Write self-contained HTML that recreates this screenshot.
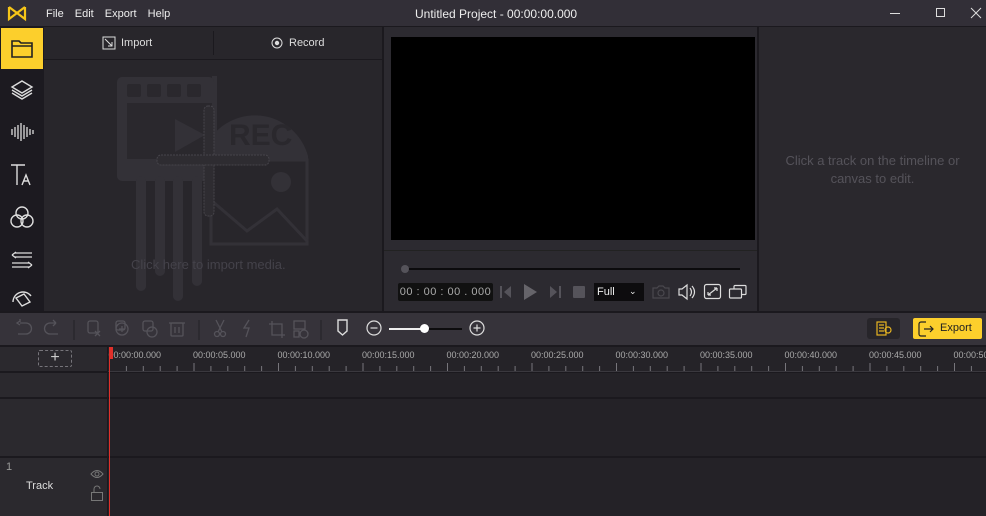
<!DOCTYPE html><html><head><style>
*{margin:0;padding:0;box-sizing:border-box}
body{width:986px;height:516px;background:#242227;font-family:"Liberation Sans",sans-serif;position:relative;overflow:hidden;color:#ddd}
.a{position:absolute}
svg{position:absolute;overflow:visible}
</style></head><body>
<div class="a" style="left:0;top:0;width:986px;height:27px;background:#322f37;border-bottom:1px solid #1b191e"></div>
<svg style="left:8px;top:6px" width="18" height="14"><path d="M1 1 L9 7 L17 1 M1 1 V13 L9 7 L17 13 V1" fill="none" stroke="#f5c518" stroke-width="2.2"/></svg>
<div class="a" style="left:46px;top:8px;font-size:11px;color:#eee;word-spacing:8px">File Edit Export Help</div>
<div class="a" style="left:415px;top:7px;font-size:12px;color:#eee">Untitled Project - 00:00:00.000</div>
<div class="a" style="left:890px;top:13px;width:10px;height:1px;background:#ddd"></div>
<div class="a" style="left:936px;top:8px;width:9px;height:9px;border:1px solid #ddd"></div>
<svg style="left:971px;top:8px" width="10" height="10"><path d="M0 0L10 10M10 0L0 10" stroke="#ddd"/></svg>
<div class="a" style="left:0;top:27px;width:44px;height:285px;background:#1c1a20"></div>
<div class="a" style="left:1px;top:28px;width:42px;height:41px;background:#fccf2c"></div>
<svg style="left:11px;top:39px" width="22" height="19"><path d="M1 2h7l2 2h11v14H1z M1 7h20" fill="none" stroke="#222" stroke-width="1.6"/></svg>
<svg style="left:11px;top:80px" width="22" height="20" fill="none" stroke="#ddd" stroke-width="1.4"><path d="M11 1L21 7L11 13L1 7Z M1 10L11 16L21 10 M1 13L11 19L21 13"/></svg>
<svg style="left:11px;top:122px" width="22" height="20" stroke="#ddd" stroke-width="1.3"><path d="M1 7v6M4 5v10M7 3v14M10 1v18M13 3v14M16 5v10M19 7v6M22 8v4"/></svg>
<svg style="left:11px;top:164px" width="22" height="22" fill="none" stroke="#ddd" stroke-width="1.4"><path d="M0 1h14M6 1v20M11 21l4-10 4 10M12.5 17h5"/></svg>
<svg style="left:10px;top:206px" width="24" height="22" fill="none" stroke="#ddd" stroke-width="1.4"><circle cx="12" cy="7" r="6"/><circle cx="7" cy="15" r="6"/><circle cx="17" cy="15" r="6"/></svg>
<svg style="left:11px;top:250px" width="22" height="20" fill="none" stroke="#ddd" stroke-width="1.3"><path d="M4 3h17M4 7h17M1 5l4-3M1 5l4 3M1 13h17M1 17h17M21 15l-4-3M21 15l-4 3"/></svg>
<svg style="left:11px;top:290px" width="22" height="20" fill="none" stroke="#ddd" stroke-width="1.4"><path d="M5 8l8-4 6 8-8 4z M2 12a10 10 0 0 1 18-6"/></svg>
<div class="a" style="left:44px;top:27px;width:338px;height:285px;background:#28262b"></div>
<div class="a" style="left:44px;top:59px;width:338px;height:1px;background:#1b191e"></div>
<div class="a" style="left:213px;top:31px;width:1px;height:24px;background:#1b191e"></div>
<svg style="left:102px;top:36px" width="14" height="14" fill="none" stroke="#ddd"><rect x="1" y="1" width="12" height="12"/><path d="M3 3l7 7M10 6v4H6"/></svg>
<div class="a" style="left:121px;top:37px;font-size:11px;color:#ddd">Import</div>
<svg style="left:271px;top:37px" width="12" height="12"><circle cx="6" cy="6" r="5" fill="none" stroke="#ddd"/><circle cx="6" cy="6" r="2.2" fill="#ddd"/></svg>
<div class="a" style="left:289px;top:37px;font-size:11px;color:#ddd">Record</div>
<svg style="left:117px;top:76px" width="195" height="170">
<path d="M95 60 A55 55 0 0 1 191 80 V83 H95Z" fill="#333137"/>
<path d="M95 0 V60 H100 V0Z" fill="#333137"/>
<rect x="0" y="1" width="97" height="104" rx="5" fill="#333137"/>
<g fill="#2a282d"><rect x="10" y="8" width="14" height="13" rx="2"/><rect x="30" y="8" width="14" height="13" rx="2"/><rect x="50" y="8" width="14" height="13" rx="2"/><rect x="70" y="8" width="14" height="13" rx="2"/><rect x="10" y="27" width="85" height="56"/></g>
<path d="M58 43 V76 L88 59Z" fill="#333137"/>
<text x="112" y="69" font-family="Liberation Sans" font-weight="bold" font-size="30" fill="#2a282d">REC</text>
<g fill="#333137"><rect x="19" y="100" width="10" height="115" rx="5"/><rect x="38" y="100" width="10" height="100" rx="5"/><rect x="56" y="100" width="10" height="125" rx="5"/><rect x="75" y="100" width="10" height="110" rx="5"/></g>
<rect x="94" y="84" width="96" height="84" fill="#28262b" stroke="#333137" stroke-width="3"/>
<circle cx="164" cy="106" r="10" fill="#333137"/>
<path d="M95 125 l35 30 30 -22 30 32" fill="none" stroke="#333137" stroke-width="3"/>
<rect x="87" y="30" width="10" height="110" rx="4" fill="#2e2c31" stroke="#46444a" stroke-dasharray="2 1"/>
<rect x="40" y="79" width="112" height="10" rx="4" fill="#2e2c31" stroke="#46444a" stroke-dasharray="2 1"/>
</svg>
<div class="a" style="left:131px;top:257px;font-size:13px;color:#44424a">Click here to import media.</div>
<div class="a" style="left:382px;top:27px;width:2px;height:285px;background:#1b191e"></div>
<div class="a" style="left:384px;top:27px;width:374px;height:285px;background:#2c2a30"></div>
<div class="a" style="left:391px;top:37px;width:364px;height:203px;background:#000"></div>
<div class="a" style="left:384px;top:250px;width:374px;height:1px;background:#222"></div>
<div class="a" style="left:404px;top:268px;width:336px;height:2px;background:#0c0b0d"></div>
<div class="a" style="left:401px;top:265px;width:8px;height:8px;border-radius:50%;background:#55535a"></div>
<div class="a" style="left:398px;top:283px;width:95px;height:18px;background:#111;border-radius:2px;font-size:11px;color:#aaa;text-align:center;line-height:18px;letter-spacing:0.5px">00 : 00 : 00 . 000</div>
<svg style="left:500px;top:285px" width="12" height="14" fill="#55535a"><rect x="0" y="1" width="2" height="12"/><path d="M11 1v12L4 7z"/></svg>
<svg style="left:523px;top:283px" width="15" height="18" fill="#66646a"><path d="M1 1v16l13-8z"/></svg>
<svg style="left:549px;top:285px" width="12" height="14" fill="#55535a"><path d="M1 1v12l7-6z"/><rect x="10" y="1" width="2" height="12"/></svg>
<div class="a" style="left:573px;top:286px;width:12px;height:12px;background:#55535a;border-radius:1px"></div>
<div class="a" style="left:594px;top:283px;width:50px;height:18px;background:#0d0c0e;font-size:11px;color:#eee;padding:3px 3px;line-height:12px">Full<span style="position:absolute;left:35px;top:2px;font-size:9px">&#8964;</span></div>
<svg style="left:652px;top:285px" width="18" height="14" fill="none" stroke="#4a484e" stroke-width="1.2"><path d="M1 3h4l2-2h4l2 2h4v10H1z"/><circle cx="9" cy="8" r="3"/></svg>
<svg style="left:678px;top:284px" width="18" height="16" fill="none" stroke="#ddd" stroke-width="1.2"><path d="M1 5h3l5-4v14l-5-4H1z M12 4q3 4 0 8 M14 2q5 6 0 12"/></svg>
<svg style="left:704px;top:284px" width="17" height="15" fill="none" stroke="#ddd" stroke-width="1.2"><rect x="0.5" y="0.5" width="16" height="14" rx="2"/><path d="M4 11l9-7M4 11h3M4 11V8M13 4h-3M13 4v3"/></svg>
<svg style="left:729px;top:285px" width="18" height="14" fill="none" stroke="#ddd" stroke-width="1.2"><rect x="5" y="0.5" width="12" height="9" rx="1"/><rect x="0.5" y="4" width="12" height="9" rx="1" fill="#2c2a30"/></svg>
<div class="a" style="left:757px;top:27px;width:2px;height:285px;background:#1b191e"></div>
<div class="a" style="left:759px;top:27px;width:227px;height:285px;background:#2a282d"></div>
<div class="a" style="left:759px;top:152px;width:227px;font-size:13px;color:#55535a;text-align:center;line-height:18px">Click a track on the timeline or<br>canvas to edit.</div>
<div class="a" style="left:0;top:311px;width:986px;height:2px;background:#1b191e"></div>
<div class="a" style="left:0;top:313px;width:986px;height:32px;background:#36333a"></div>
<svg style="left:0;top:313px" width="986" height="32" fill="none" stroke="#55535a" stroke-width="1.3">
<path d="M20 9v-3 M20 8l-3 2 3 2 M20 10h6a5 5 0 0 1 0 11h-8"/>
<path d="M56 10h-6a5 5 0 0 0 0 11h8 M56 10l-3-3 M56 10l-3 3"/>
<path d="M74 7v20M199 7v20M321 7v20" stroke="#28262b"/>
<rect x="88" y="8" width="10" height="12" rx="2"/><path d="M95 18l5 5M100 18l-5 5"/>
<circle cx="122" cy="16" r="6"/><path d="M122 13v6M119 16h6"/><rect x="116" y="8" width="9" height="9" rx="2"/>
<rect x="143" y="8" width="10" height="10" rx="2"/><circle cx="152" cy="19" r="5"/>
<rect x="171" y="10" width="12" height="13" rx="1"/><path d="M169 10h16M175 14v6M179 14v6"/>
<path d="M216 7l6 12M224 7l-6 12"/><circle cx="217" cy="21" r="2.5"/><circle cx="223" cy="21" r="2.5"/>
<path d="M249 7l-5 8h5l-3 9"/>
<path d="M272 8v14h13M269 11h13v14"/>
<rect x="294" y="8" width="11" height="8"/><rect x="294" y="18" width="5" height="6"/><circle cx="304" cy="21" r="4"/>
</svg>
<svg style="left:337px;top:319px" width="12" height="18" fill="none" stroke="#ddd" stroke-width="1.4"><path d="M1 1h9v11l-4.5 4-4.5-4z"/></svg>
<svg style="left:366px;top:320px" width="16" height="16" fill="none" stroke="#ddd" stroke-width="1.2"><circle cx="8" cy="8" r="7"/><path d="M4.5 8h7"/></svg>
<div class="a" style="left:389px;top:328px;width:36px;height:2px;background:#eee"></div>
<div class="a" style="left:425px;top:328px;width:37px;height:2px;background:#0d0c0e"></div>
<div class="a" style="left:420px;top:324px;width:9px;height:9px;border-radius:50%;background:#fff"></div>
<svg style="left:469px;top:320px" width="16" height="16" fill="none" stroke="#ddd" stroke-width="1.2"><circle cx="8" cy="8" r="7"/><path d="M4.5 8h7M8 4.5v7"/></svg>
<div class="a" style="left:867px;top:318px;width:33px;height:21px;background:#27252a;border-radius:3px"></div>
<svg style="left:876px;top:321px" width="16" height="15" fill="none" stroke="#e6b422" stroke-width="1.2"><rect x="1" y="1" width="9" height="13"/><path d="M3 4h5M3 7h5M3 10h5"/><circle cx="12" cy="9" r="3"/></svg>
<div class="a" style="left:913px;top:318px;width:69px;height:21px;background:#fccf2c;border-radius:2px;font-size:11px;color:#222;line-height:21px;padding-left:27px">Export</div>
<svg style="left:918px;top:321px" width="16" height="16" fill="none" stroke="#222" stroke-width="1.2"><path d="M8 1H3a2 2 0 0 0-2 2v10a2 2 0 0 0 2 2h5M6 8h9M12 5l3 3-3 3"/></svg>
<div class="a" style="left:0;top:345px;width:986px;height:2px;background:#1b191e"></div>
<div class="a" style="left:0;top:347px;width:108px;height:169px;background:#2b292e"></div>
<div class="a" style="left:108px;top:347px;width:878px;height:26px;background:#252328"></div>
<div class="a" style="left:38px;top:350px;width:34px;height:17px;border:1px dashed #77757b;border-radius:2px;color:#ccc;text-align:center;font-size:16px;line-height:14px">+</div>
<div class="a" style="left:0;top:371px;width:986px;height:2px;background:#1b191e"></div>
<div class="a" style="left:0;top:397px;width:986px;height:2px;background:#1b191e"></div>
<div class="a" style="left:0;top:456px;width:986px;height:2px;background:#1b191e"></div>
<div class="a" style="left:107px;top:347px;width:1px;height:169px;background:#1b191e"></div>
<svg style="left:108px;top:347px" width="878" height="26" id="r"></svg>
<div class="a" style="left:109px;top:347px;width:1px;height:169px;background:#e0302a"></div>
<div class="a" style="left:109px;top:347px;width:4px;height:12px;background:#e0302a"></div>
<div class="a" style="left:6px;top:461px;font-size:11px;color:#999">1</div>
<div class="a" style="left:26px;top:480px;font-size:11px;color:#ddd">Track</div>
<svg style="left:90px;top:469px" width="14" height="10" fill="none" stroke="#777" stroke-width="1"><path d="M1 5q6-7 12 0q-6 7-12 0z"/><circle cx="7" cy="5" r="2"/></svg>
<svg style="left:91px;top:486px" width="12" height="15" fill="none" stroke="#777" stroke-width="1"><rect x="0.5" y="6.5" width="11" height="8"/><path d="M3 6.5V3a3 3 0 0 1 6 0"/></svg>
<script>
var s='',x0=109.5,sp=84.5;
for(var i=0;i<60;i++){var x=x0+i*sp/5;if(x>986)break;var maj=i%5==0;s+='<line x1="'+(x-108)+'" x2="'+(x-108)+'" y1="'+(maj?16:19)+'" y2="24" stroke="#77757b"/>';}
for(var k=0;k<11;k++){var t=k*5;s+='<text x="'+(x0-108-1+k*sp)+'" y="11" font-family="Liberation Sans" font-size="9" fill="#aaa">00:00:'+(t<10?'0':'')+t+'.000</text>';}
s+='<line x1="0" x2="878" y1="24.5" y2="24.5" stroke="#3a383e"/>';
document.getElementById('r').innerHTML=s;
</script>
</body></html>
